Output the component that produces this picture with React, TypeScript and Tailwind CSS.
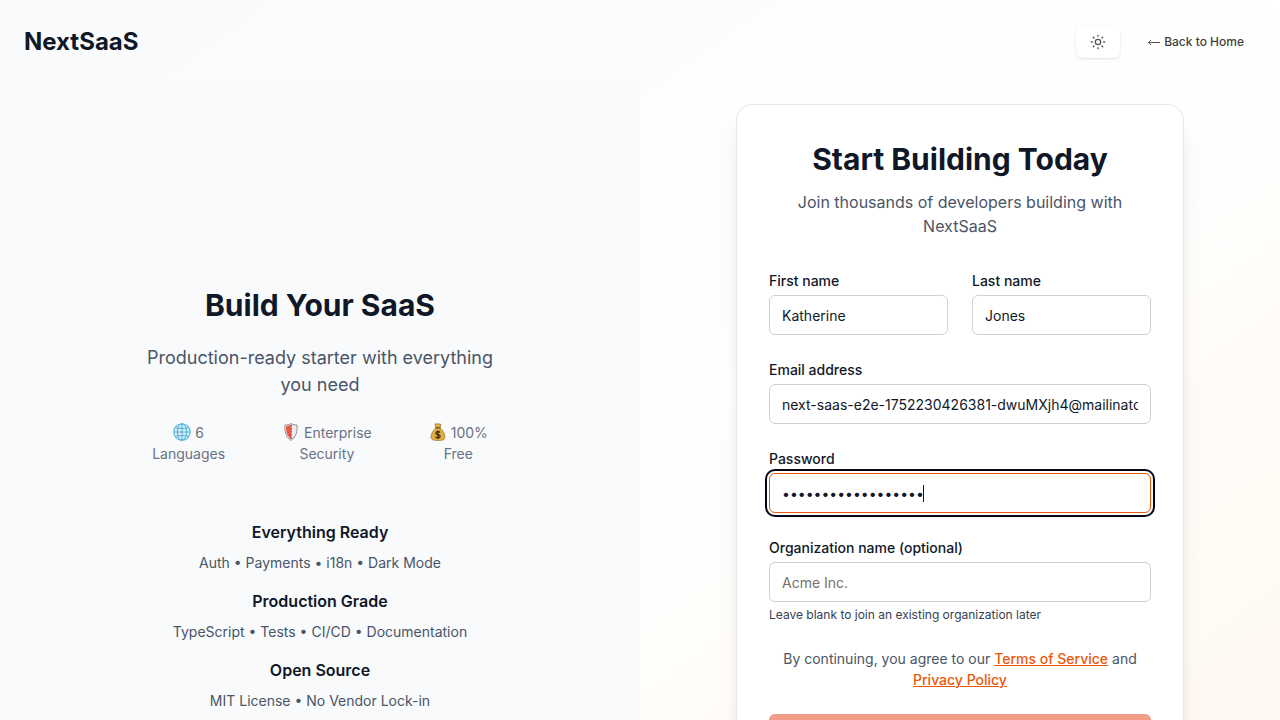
import type { ReactNode } from "react";

const highlights: { icon: ReactNode; lines: [string, string] }[] = [
  { icon: <GlobeIcon />, lines: ["6", "Languages"] },
  { icon: <ShieldIcon />, lines: ["Enterprise", "Security"] },
  { icon: <MoneyBagIcon />, lines: ["100%", "Free"] },
];

const features = [
  { title: "Everything Ready", text: "Auth • Payments • i18n • Dark Mode" },
  { title: "Production Grade", text: "TypeScript • Tests • CI/CD • Documentation" },
  { title: "Open Source", text: "MIT License • No Vendor Lock-in" },
];

const labelClass = "mb-1 block text-sm leading-[21px] font-medium";

const inputClass =
  "block h-10 w-full rounded-md border border-[#d1d1d1] bg-white px-3 text-sm text-gray-900 placeholder:text-[#78716c] focus:border-[#ea580c] focus:outline-2 focus:outline-offset-2 focus:outline-[#020617]";

function SunIcon() {
  return (
    <svg className="size-4" viewBox="0 0 24 24" fill="none" stroke="currentColor" strokeWidth="2" strokeLinecap="round" strokeLinejoin="round" aria-hidden="true">
      <circle cx="12" cy="12" r="4" />
      <path d="M12 2v1.500M12 20.500v1.500M4.93 4.93l1.1 1.1M17.970 17.970l1.1 1.1M2 12h1.500M20.500 12h1.500M6.030 17.970l-1.1 1.1M19.070 4.930l-1.1 1.1" />
    </svg>
  );
}

function ArrowIcon() {
  return (
    <svg className="h-2 w-3" viewBox="0 0 12 8" fill="none" stroke="currentColor" strokeWidth="0.9" aria-hidden="true">
      <path d="M.6 4.500h11.400M3.200 1.900.6 4.500l2.600 2.600" />
    </svg>
  );
}

function GlobeIcon() {
  return (
    <svg className="inline-block h-[18px] w-[18px] align-[-3px]" viewBox="0 0 18 18" fill="none" aria-hidden="true">
      <circle cx="9" cy="9" r="8.2" fill="#d3eefa" stroke="#55b5e0" strokeWidth="1.1" />
      <path d="M9 .8v16.4M.8 9h16.4M2.4 4.6c4 1.2 9.200 1.200 13.200 0M2.400 13.400c4-1.200 9.200-1.200 13.200 0" stroke="#4ba6d3" strokeWidth="0.9" />
      <ellipse cx="9" cy="9" rx="4.6" ry="8.2" stroke="#4ba6d3" strokeWidth="0.9" />
    </svg>
  );
}

function ShieldIcon() {
  return (
    <svg className="inline-block h-[18px] w-[18px] align-[-3px]" viewBox="0 0 18 18" fill="none" aria-hidden="true">
      <path d="M9 .6C7 1.700 5 2 3 2c-.5 6 .5 11.500 6 15.500C14.500 13.500 15.500 8 15 2c-2 0-4-.3-6-1.400Z" fill="#ececec" stroke="#858585" strokeWidth="0.9" />
      <path d="M9.300 1.800C7.500 2.700 6 3.100 4 3.200 3.900 8 4.800 12.800 9.300 16.200Z" fill="#ea5a45" />
      <path d="M9.300 2.300V15.800" stroke="#8f3a32" strokeWidth="1.3" strokeDasharray="1.300 1.700" />
    </svg>
  );
}

function MoneyBagIcon() {
  return (
    <svg className="inline-block h-[18px] w-[18px] align-[-3px]" viewBox="0 0 18 18" fill="none" aria-hidden="true">
      <path d="M6 1c1-.8 2 .2 3-.2s2 .9 3 .2L11 5c3 2 5 6 5 9 0 2.600-2 3.500-7 3.500S2 16.600 2 14c0-3 2-7 5-9Z" fill="#e0ae3d" stroke="#8a6420" strokeWidth="0.6" />
      <path d="M6.500 4.800h5" stroke="#6b4710" strokeWidth="1.2" />
      <path d="M11.200 9.400C9.800 8 6.800 8.400 6.800 10.200s4.400 1.100 4.400 3-3.200 2.100-4.600.6M9 7.500v8.500" stroke="#2f2410" strokeWidth="1.2" />
    </svg>
  );
}

export default function App() {
  return (
    <div className="flex min-h-screen flex-col bg-linear-to-br from-slate-50 via-white to-orange-50 font-[Inter,sans-serif] text-gray-900">
      <header className="flex h-20 items-center justify-between px-6 pt-1">
        <a href="#" className="text-2xl font-bold">NextSaaS</a>
        <div className="flex items-center gap-4">
          <button type="button" aria-label="Toggle theme" className="flex h-8 w-11 items-center justify-center rounded-md bg-white text-[#57534e] shadow-sm">
            <SunIcon />
          </button>
          <a href="#" className="flex items-center gap-1 px-3 text-xs font-medium text-[#44403c]">
            <ArrowIcon />
            Back to Home
          </a>
        </div>
      </header>

      <main className="grid flex-1 grid-cols-2">
        <section className="flex flex-col items-center justify-center bg-slate-50 px-12 py-12 text-center">
          <div className="w-full max-w-96">
            <h2 className="text-3xl leading-[45px] font-bold">Build Your SaaS</h2>
            <p className="mt-4 px-4 text-lg leading-[27px] text-gray-600">Production-ready starter with everything you need</p>
            <ul className="mt-6 flex justify-center gap-[57px] text-sm leading-[21px] whitespace-nowrap text-gray-500">
              {highlights.map((item) => (
                <li key={item.lines[1]}>
                  {item.icon} {item.lines[0]}
                  <br />
                  {item.lines[1]}
                </li>
              ))}
            </ul>
            <div className="mt-14 space-y-4">
              {features.map((feature) => (
                <div key={feature.title}>
                  <h3 className="text-base leading-6 font-semibold">{feature.title}</h3>
                  <p className="mt-2 text-sm leading-[21px] text-gray-600">{feature.text}</p>
                </div>
              ))}
            </div>
          </div>
        </section>

        <section className="flex justify-center p-6">
          <form className="w-full max-w-md rounded-2xl border border-gray-200 bg-white px-8 pt-8 pb-[125px] shadow-xl" onSubmit={(event) => event.preventDefault()}>
            <h1 className="text-center text-3xl leading-[45px] font-bold">Start Building Today</h1>
            <p className="mt-2 text-center text-base leading-6 text-gray-600">Join thousands of developers building with NextSaaS</p>
            <div className="mt-8 grid grid-cols-2 gap-6">
              <div>
                <label htmlFor="first-name" className={labelClass}>First name</label>
                <input id="first-name" className={inputClass} defaultValue="Katherine" />
              </div>
              <div>
                <label htmlFor="last-name" className={labelClass}>Last name</label>
                <input id="last-name" className={inputClass} defaultValue="Jones" />
              </div>
              <div className="col-span-2">
                <label htmlFor="email" className={labelClass}>Email address</label>
                <input id="email" type="email" className={inputClass} defaultValue="next-saas-e2e-1752230426381-dwuMXjh4@mailinator.com" />
              </div>
              <div className="col-span-2">
                <label htmlFor="password" className={labelClass}>Password</label>
                <div className="relative">
                  <input id="password" type="password" autoFocus className={`${inputClass} caret-transparent`} defaultValue="Passw0rd-Example-1" />
                  <span className="pointer-events-none absolute top-3 left-[154px] h-[17px] w-px bg-gray-900" aria-hidden="true" />
                </div>
              </div>
              <div className="col-span-2">
                <label htmlFor="organization" className={labelClass}>Organization name (optional)</label>
                <input id="organization" className={inputClass} placeholder="Acme Inc." aria-describedby="organization-hint" />
                <p id="organization-hint" className="mt-1 text-xs leading-[18px] text-gray-700">Leave blank to join an existing organization later</p>
              </div>
            </div>
            <p className="mt-6 text-center text-sm leading-[21px] text-gray-600">
              By continuing, you agree to our <a href="#" className="font-medium text-[#ea580c] underline">Terms of Service</a> and{" "}
              <a href="#" className="font-medium text-[#ea580c] underline">Privacy Policy</a>
            </p>
            <button type="submit" aria-label="Create account" disabled className="mt-6 h-11 w-full rounded-md bg-[#f19d87]" />
          </form>
        </section>
      </main>
    </div>
  );
}
